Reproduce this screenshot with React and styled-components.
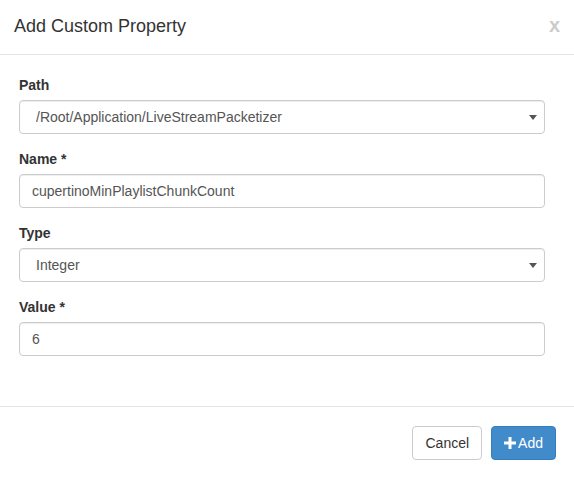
import React, { useState } from 'react';
import styled, { createGlobalStyle } from 'styled-components';

const GlobalStyle = createGlobalStyle`
  html, body {
    margin: 0;
    padding: 0;
    background: #fff;
  }
  body {
    font-family: "Liberation Sans", Arial, Helvetica, sans-serif;
    font-size: 14px;
    line-height: 1.42857;
    color: #333;
  }
  * {
    box-sizing: border-box;
  }
`;

const Modal = styled.div`
  width: 574px;
  height: 477px;
  background: #fff;
  display: flex;
  flex-direction: column;
`;

const Header = styled.div`
  height: 55px;
  padding: 13px 14px 0 14px;
  border-bottom: 1px solid #e5e5e5;
  display: flex;
  align-items: flex-start;
  justify-content: space-between;
`;

const Title = styled.h4`
  margin: 0;
  font-size: 18px;
  font-weight: normal;
  line-height: 26px;
  color: #333;
`;

const Close = styled.button`
  border: 0;
  background: transparent;
  padding: 0;
  margin: 0;
  font-family: "Liberation Sans", Arial, sans-serif;
  font-size: 20px;
  font-weight: bold;
  line-height: 24px;
  color: #000;
  opacity: 0.2;
  cursor: pointer;
`;

const Body = styled.div`
  padding: 20px 29px 35px 19px;
  border-bottom: 1px solid #e5e5e5;
`;

const FormGroup = styled.div`
  margin-bottom: 15px;
`;

const Label = styled.label`
  display: block;
  font-weight: bold;
  font-size: 14px;
  line-height: 20px;
  margin-bottom: 5px;
  color: #333;
`;

const fieldStyles = `
  display: block;
  width: 100%;
  height: 34px;
  padding: 6px 12px;
  font-family: "Liberation Sans", Arial, sans-serif;
  font-size: 14px;
  line-height: 20px;
  color: #555;
  background: #fff;
  border: 1px solid #ccc;
  border-radius: 4px;
  box-shadow: inset 0 1px 1px rgba(0, 0, 0, 0.075);
  outline: none;
`;

const Input = styled.input`
  ${fieldStyles}
`;

const SelectWrap = styled.div`
  position: relative;
`;

const Select = styled.select`
  ${fieldStyles}
  appearance: none;
  padding-left: 16px;
`;

const Caret = styled.svg`
  position: absolute;
  right: 8px;
  top: 15px;
  pointer-events: none;
`;

const Footer = styled.div`
  padding: 19px 18px 0 0;
  display: flex;
  justify-content: flex-end;
  gap: 9px;
`;

const Button = styled.button`
  height: 34px;
  padding: 6px 12px;
  font-family: "Liberation Sans", Arial, sans-serif;
  font-size: 14px;
  line-height: 20px;
  border-radius: 4px;
  border: 1px solid ${(p) => (p.primary ? '#357ebd' : '#ccc')};
  background: ${(p) => (p.primary ? '#428bca' : '#fff')};
  color: ${(p) => (p.primary ? '#fff' : '#333')};
  display: inline-flex;
  align-items: center;
  gap: 2px;
  cursor: pointer;
`;

const PlusIcon = () => (
  <svg width="12" height="12" viewBox="0 0 12 12">
    <path d="M4.5 0h3v4.5H12v3H7.5V12h-3V7.5H0v-3h4.5z" fill="#fff" />
  </svg>
);

const SelectField = ({ value, options, onChange }) => (
  <SelectWrap>
    <Select value={value} onChange={onChange}>
      {options.map((o) => (
        <option key={o}>{o}</option>
      ))}
    </Select>
    <Caret width="8" height="5" viewBox="0 0 8 5">
      <path d="M0 0h8L4 5z" fill="#555" />
    </Caret>
  </SelectWrap>
);

const App = () => {
  const [path, setPath] = useState('/Root/Application/LiveStreamPacketizer');
  const [name, setName] = useState('cupertinoMinPlaylistChunkCount');
  const [type, setType] = useState('Integer');
  const [value, setValue] = useState('6');

  return (
    <>
      <GlobalStyle />
      <Modal>
        <Header>
          <Title>Add Custom Property</Title>
          <Close>x</Close>
        </Header>
        <Body>
          <FormGroup>
            <Label>Path</Label>
            <SelectField
              value={path}
              options={['/Root/Application/LiveStreamPacketizer', '/Root/Application']}
              onChange={(e) => setPath(e.target.value)}
            />
          </FormGroup>
          <FormGroup>
            <Label>Name *</Label>
            <Input value={name} onChange={(e) => setName(e.target.value)} />
          </FormGroup>
          <FormGroup>
            <Label>Type</Label>
            <SelectField
              value={type}
              options={['Integer', 'String', 'Boolean']}
              onChange={(e) => setType(e.target.value)}
            />
          </FormGroup>
          <FormGroup>
            <Label>Value *</Label>
            <Input value={value} onChange={(e) => setValue(e.target.value)} />
          </FormGroup>
        </Body>
        <Footer>
          <Button>Cancel</Button>
          <Button primary>
            <PlusIcon />
            Add
          </Button>
        </Footer>
      </Modal>
    </>
  );
};

export default App;
